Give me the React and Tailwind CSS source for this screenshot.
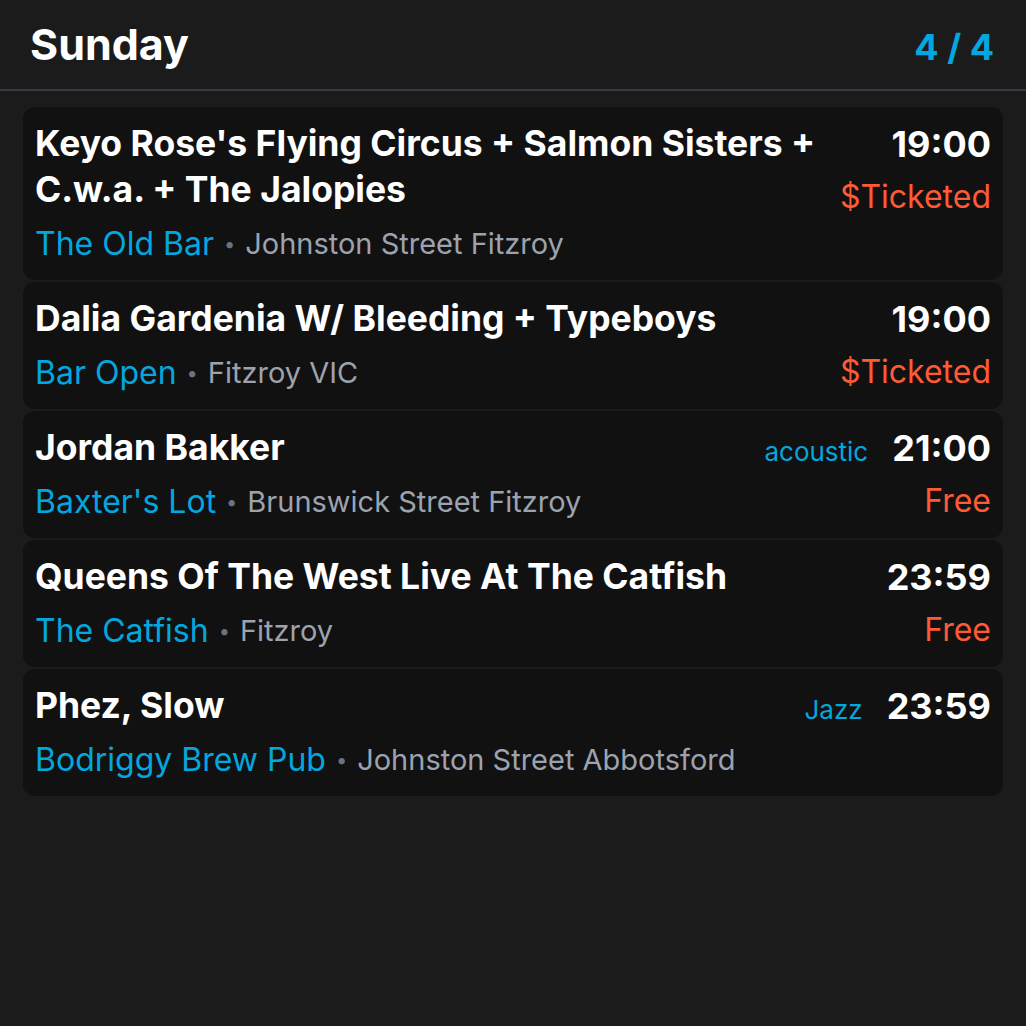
import React from "react";

const gigs = [
  {
    title: "Keyo Rose's Flying Circus + Salmon Sisters + C.w.a. + The Jalopies",
    venue: "The Old Bar",
    place: "Johnston Street Fitzroy",
    time: "19:00",
    price: "$Ticketed",
  },
  {
    title: "Dalia Gardenia W/ Bleeding + Typeboys",
    venue: "Bar Open",
    place: "Fitzroy VIC",
    time: "19:00",
    price: "$Ticketed",
  },
  {
    title: "Jordan Bakker",
    venue: "Baxter's Lot",
    place: "Brunswick Street Fitzroy",
    time: "21:00",
    price: "Free",
    tag: "acoustic",
  },
  {
    title: "Queens Of The West Live At The Catfish",
    venue: "The Catfish",
    place: "Fitzroy",
    time: "23:59",
    price: "Free",
  },
  {
    title: "Phez, Slow",
    venue: "Bodriggy Brew Pub",
    place: "Johnston Street Abbotsford",
    time: "23:59",
    tag: "Jazz",
  },
];

function GigCard({ gig }) {
  return (
    <div className="flex gap-6 rounded-xl bg-[#111111] px-3 pt-[14px] pb-4">
      <div className="min-w-0 flex-1">
        <h2 className="text-[35.5px] leading-[46px] font-bold text-white">{gig.title}</h2>
        <div className="mt-[11px] flex items-center text-[32px] leading-[40px]">
          <span className="text-[#03a7df]">{gig.venue}</span>
          <span className="mx-[10px] text-[20px] text-[#6b7280]">•</span>
          <span className="text-[29px] text-[#9ca3af]">{gig.place}</span>
        </div>
      </div>
      <div className="flex shrink-0 flex-col items-end">
        <div className="flex items-baseline gap-6">
          {gig.tag && <span className="text-[26px] text-[#03a7df]">{gig.tag}</span>}
          <span className="text-[36px] leading-[46px] font-bold text-white">{gig.time}</span>
        </div>
        {gig.price && (
          <span className="mt-[10px] text-[32px] leading-[40px] text-[#ff5a36]">{gig.price}</span>
        )}
      </div>
    </div>
  );
}

export default function App() {
  return (
    <div
      className="min-h-screen bg-[#1b1b1b]"
      style={{ fontFamily: "Inter, 'Noto Sans', sans-serif" }}
    >
      <header className="flex items-baseline justify-between border-b-2 border-[#353b45] pl-[30px] pr-8 pt-5 pb-[18px]">
        <h1 className="text-[43px] leading-[48px] font-bold text-white">Sunday</h1>
        <span className="text-[36px] leading-[48px] font-bold text-[#03a7df]">4 / 4</span>
      </header>

      <div className="flex flex-col gap-[2px] px-[23px] pt-4">
        {gigs.map((gig, i) => (
          <GigCard key={i} gig={gig} />
        ))}
      </div>
    </div>
  );
}
